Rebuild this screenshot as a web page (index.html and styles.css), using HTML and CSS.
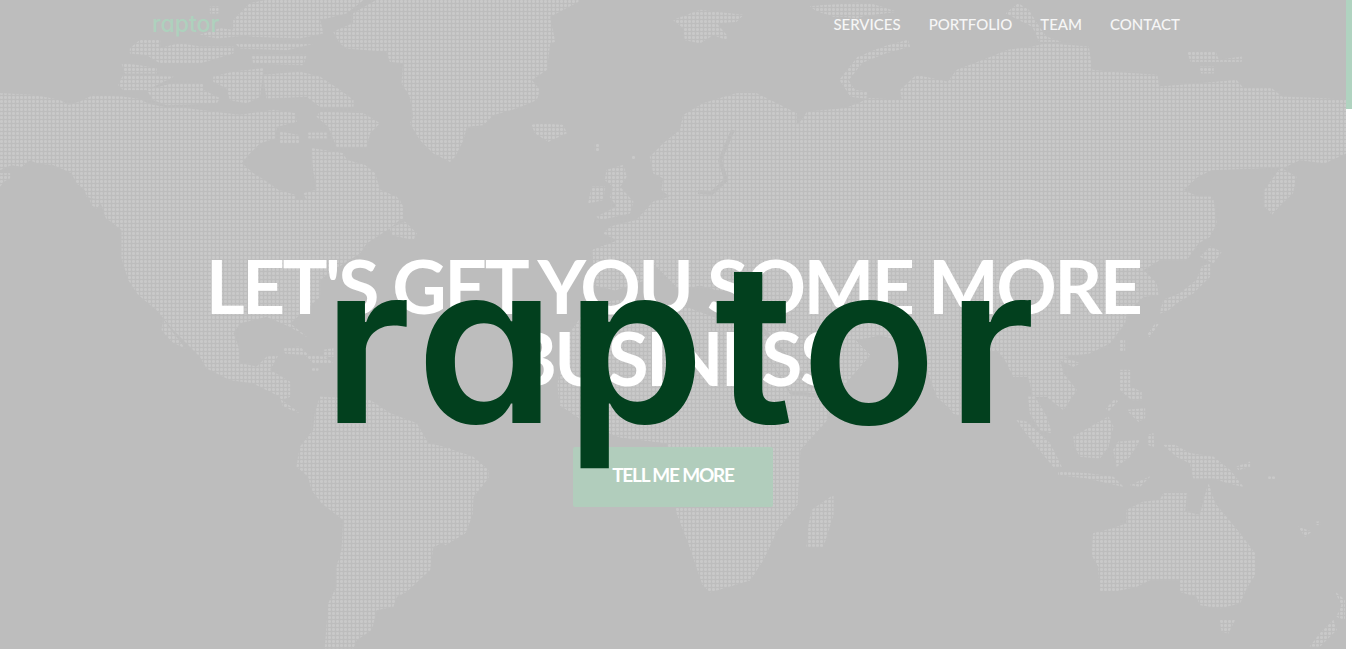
FILE: index.html
```html
<!DOCTYPE html>
<html lang="en">
<head>
<meta charset="utf-8">
<title>raptor</title>
<link rel="stylesheet" href="styles.css">
</head>
<body>
<div class="page">
  <section class="hero">
    <svg class="map" width="1346" height="649" viewBox="0 0 1346 649" aria-hidden="true">
      <defs>
        <pattern id="dots" width="4" height="4" patternUnits="userSpaceOnUse">
          <rect width="3" height="3" rx="1" fill="#c9c9c9"/>
        </pattern>
        <mask id="land" maskUnits="userSpaceOnUse" x="0" y="0" width="1346" height="649">
          <g fill="#fff" stroke="#fff" stroke-width="1">
            <!-- Crop of the north-west: Alaska, Canada, arctic islands, Greenland -->
            <g transform="scale(.3333)">
              <polygon points="0,280 100,285 180,300 205,315 240,305 280,285 370,290 420,298 445,312 495,322 560,325 640,335 720,345 820,330 885,340 890,365 830,380 825,415 780,430 745,465 725,490 760,520 800,545 835,570 885,585 885,610 905,640 925,610 910,580 950,570 940,510 935,445 1030,460 1040,480 1095,495 1125,520 1140,570 1190,590 1210,620 1210,660 320,660 300,600 260,590 255,570 230,550 215,520 195,510 160,495 110,490 90,480 65,500 35,495 0,510"/>
              <polygon points="0,520 30,520 30,535 10,545 0,560"/>
              <polygon points="960,335 1090,340 1140,370 1110,400 1100,440 1010,440 985,380 950,350"/>
              <polygon points="840,395 895,405 900,430 840,430"/>
              <polygon points="925,398 980,398 980,415 925,415"/>
              <polygon points="790,225 900,215 960,230 1020,270 1060,300 1060,320 960,320 920,290 800,295"/>
              <polygon points="355,255 370,225 520,230 440,270 370,270"/>
              <polygon points="440,270 520,250 610,250 610,270 660,295 650,310 500,315 460,300"/>
              <polygon points="640,230 700,215 790,205 780,290 740,310 690,300 680,265 640,245"/>
              <polygon points="365,190 410,195 470,205 470,220 375,220"/>
              <polygon points="390,145 420,120 480,120 480,145 540,130 600,140 700,140 700,160 600,190 480,190 440,165 390,160"/>
              <polygon points="705,130 945,130 860,150 720,145"/>
              <polygon points="755,165 920,165 910,195 760,190"/>
              <polygon points="700,60 750,10 800,0 1090,0 1040,40 960,60 970,100 900,115 760,110 700,100"/>
              <polygon points="630,20 655,20 655,40 630,40"/>
              <polygon points="600,105 660,85 700,90 750,105 650,115"/>
              <polygon points="1000,95 1060,70 1060,40 1130,0 1350,0 1350,485 1300,460 1260,420 1230,370 1240,350 1230,290 1205,250 1210,190 1170,185 1160,155 1040,145 1020,130"/>
            </g>
            <!-- Crop of the north Atlantic: Greenland, Iceland, Europe -->
            <g transform="translate(450 0) scale(.3333)">
              <polygon points="0,485 15,470 40,420 50,380 100,375 130,345 200,325 260,300 270,270 245,240 290,210 300,130 315,125 300,50 385,5 385,0 0,0"/>
              <polygon points="245,375 270,370 340,375 350,400 295,425 255,400"/>
              <polygon points="670,60 750,30 880,45 860,65 800,70 830,105 830,120 790,105 750,130 705,120 700,85"/>
              <polygon points="470,510 520,495 530,530 510,560 550,605 540,640 450,660 440,650 500,620 480,590 490,560 465,540"/>
              <polygon points="425,560 465,560 460,600 415,610"/>
              <polygon points="600,470 640,430 690,390 700,345 760,310 860,280 920,280 980,310 1040,340 1040,375 1080,340 1130,350 1190,325 1260,295 1350,310 1350,780 520,780 520,740 490,715 460,700 480,680 560,660 610,605 660,590 635,570 640,535 610,520"/>
              <polygon points="1080,20 1130,15 1200,15 1260,10 1340,35 1260,45 1150,50 1110,35"/>
              <polygon points="435,430 447,430 447,455 435,455"/>
              <polygon points="545,468 555,468 555,478 545,478"/>
            </g>
            <!-- Crop of Siberia -->
            <g transform="translate(800 0) scale(.352 .3333)">
              <polygon points="0,660 0,370 20,335 130,325 200,295 290,300 285,270 330,225 420,245 445,210 520,180 590,150 660,140 700,130 820,140 830,210 880,215 1015,225 1020,260 1140,250 1240,240 1260,265 1340,265 1370,290 1480,295 1552,300 1552,460 1490,490 1420,480 1360,510 1320,570 1320,620 1340,640 1400,580 1410,530 1360,500 1300,505 1170,510 1130,530 1090,570 1130,590 1170,590 1175,660"/>
              <polygon points="30,20 160,8 230,20 265,35 190,45 160,55 90,45 50,35"/>
              <polygon points="585,40 620,10 650,30 670,65 700,110 740,125 680,125 660,80"/>
              <polygon points="1100,155 1180,155 1190,180 1255,170 1255,185 1110,185"/>
              <polygon points="1135,200 1175,200 1175,220 1140,220"/>
              <polyline points="310,130 240,150 170,180 125,240 150,280 190,285" fill="none" stroke-width="22"/>
            </g>
            <!-- Crop of North and Central America -->
            <g transform="translate(0 200) scale(.3333)">
              <polygon points="310,0 1200,0 1210,50 1170,85 1100,130 1080,160 1000,210 960,240 960,290 870,370 920,410 870,380 800,350 720,370 700,400 715,440 720,490 770,500 800,470 835,465 810,510 870,545 870,590 845,600 900,640 850,620 840,590 760,550 690,540 620,505 600,470 520,390 470,330 415,285 385,240 365,175 365,90 320,55"/>
              <polygon points="270,0 310,0 290,25 275,15"/>
              <polygon points="490,360 520,400 555,445 515,425 485,390"/>
              <polygon points="1170,85 1215,65 1250,100 1240,120 1175,105"/>
              <polygon points="850,445 900,440 925,465 975,470 1000,490 940,490 915,465 855,460"/>
              <polygon points="970,450 1000,445 1000,470 972,470"/>
              <polygon points="935,505 955,505 955,512 935,512"/>
              <polygon points="960,590 1110,600 1170,640 1250,670 1285,730 1350,745 1350,1020 1300,1040 1290,1110 1220,1175 1190,1190 1180,1220 1130,1230 1115,1290 1070,1320 1060,1345 975,1345 985,1210 1010,1160 1010,1100 1025,1050 1030,960 965,910 935,870 925,830 890,800 900,740 940,690 945,640"/>
            </g>
            <polygon points="445,448 473,457 488,470 488,478 473,497 472,515 465,533 445,545"/>
            <!-- Africa, Iberia, Middle East -->
            <polygon points="590,305 620,300 680,305 720,320 745,325 760,345 790,395 830,400 827,420 800,450 797,505 777,530 763,560 750,580 710,592 703,585 690,547 677,513 668,443 620,437 590,425 560,405 558,385 565,340"/>
            <polygon points="593,250 620,240 650,255 645,280 615,290 595,285"/>
            <polygon points="650,240 960,240 960,415 953,413 940,390 920,345 880,335 855,340 870,355 835,395 790,390 745,320 735,295 700,285 680,290 650,260"/>
            <!-- Crop of Asia and Oceania -->
            <g transform="translate(900 200) scale(.3333)">
              <polygon points="940,0 950,70 930,110 895,130 860,180 780,180 730,210 770,250 775,285 730,290 680,340 675,370 630,430 570,460 490,470 540,490 520,500 480,480 490,520 530,570 490,630 440,590 400,590 385,530 340,530 315,480 290,450 180,480 165,640 110,590 60,450 0,420 0,0"/>
              <polygon points="385,590 405,590 440,650 455,700 420,690 390,640"/>
              <polygon points="350,660 380,665 450,730 485,800 460,800 410,740 370,690"/>
              <polygon points="475,815 560,820 640,830 670,860 560,835 475,825"/>
              <polygon points="690,855 750,830 720,860"/>
              <polygon points="520,710 590,670 625,650 640,680 625,740 600,775 540,770 525,740"/>
              <polygon points="655,725 720,720 690,770 650,800 640,750"/>
              <polygon points="745,705 760,700 762,740 745,735"/>
              <polygon points="660,510 690,510 690,560 725,575 725,600 695,600 660,570"/>
              <polygon points="680,630 735,625 735,655 715,665"/>
              <polyline points="622,630 650,600" fill="none" stroke-width="12"/>
              <polyline points="745,408 772,370" fill="none" stroke-width="10"/>
              <polygon points="780,340 790,300 840,280 890,240 905,200 930,190 930,230 880,280 830,310 800,335"/>
              <polygon points="900,170 930,140 965,155 940,190"/>
              <polygon points="1095,5 1150,5 1115,45"/>
              <polygon points="660,420 675,420 675,455 660,455"/>
              <polygon points="790,735 825,735 870,760 940,770 990,810 1030,860 985,850 940,835 880,835 870,790 830,770"/>
              <polygon points="1010,800 1050,785 1050,800 1015,810"/>
              <polygon points="1105,830 1125,830 1125,838 1105,838"/>
              <polygon points="580,1000 640,985 680,970 680,930 730,905 780,900 790,880 860,880 855,935 900,945 925,850 945,910 970,940 1020,1000 1065,1060 1065,1125 1040,1165 1020,1210 960,1225 900,1215 890,1190 840,1175 840,1140 750,1140 710,1160 640,1175 600,1175 595,1100 575,1065"/>
              <polygon points="960,1260 1005,1260 985,1300 965,1295"/>
              <polygon points="1305,1175 1335,1200 1335,1260 1310,1250 1325,1215"/>
              <polygon points="1230,1340 1260,1300 1300,1260 1310,1290 1260,1340"/>
              <polygon points="1195,980 1235,995 1215,1010"/>
              <polygon points="1250,965 1260,965 1260,975 1250,975"/>
            </g>
            <!-- Madagascar -->
            <g transform="translate(450 400) scale(.3333)">
              <polygon points="1150,285 1150,345 1120,440 1070,440 1075,380 1085,330"/>
            </g>
          </g>
          <!-- Seas cut back out of the land -->
          <g fill="none" stroke="#000" stroke-width="4">
            <polyline points="755,320 810,385 838,388"/>
            <polyline points="733,130 720,160 726,180 712,193 698,192"/>
            <polyline points="665,290 735,293"/>
          </g>
        </mask>
      </defs>
      <rect width="1346" height="649" fill="url(#dots)" mask="url(#land)"/>
    </svg>

    <header class="topbar">
      <a class="logo" href="#">raptor</a>
      <nav class="menu">
        <a href="#">SERVICES</a>
        <a href="#">PORTFOLIO</a>
        <a href="#">TEAM</a>
        <a href="#">CONTACT</a>
      </nav>
    </header>

    <div class="intro">
      <h1>LET'S GET YOU SOME MORE<br>BUSINESS</h1>
      <a class="cta" href="#">TELL ME MORE</a>
    </div>

    <div class="splash">raptor</div>
  </section>
  <div class="rail"></div>
</div>
</body>
</html>
```
FILE: styles.css
```css
* { box-sizing: border-box; }

html, body {
  margin: 0;
  height: 100%;
  overflow: hidden;
  background: #fff;
}

body { font-family: "Lato", "Liberation Sans", sans-serif; }

a { text-decoration: none; color: inherit; }

.page {
  display: flex;
  align-items: flex-start;
  height: 649px;
}

.hero {
  position: relative;
  flex: 1;
  height: 649px;
  overflow: hidden;
  background: #bdbdbd;
}

.map {
  position: absolute;
  top: 0;
  left: 0;
  display: block;
}

.rail {
  flex: 0 0 6px;
  height: 109px;
  background: #b0d3c0;
}

.topbar {
  position: relative;
  display: flex;
  align-items: center;
  justify-content: space-between;
  height: 50px;
  padding: 0 166px 2px 152px;
}

.logo {
  font-family: "Inter", "Lato", sans-serif;
  font-feature-settings: "cv11" 1;
  font-size: 23px;
  font-weight: 500;
  color: #aed1bd;
}

.menu {
  display: flex;
  gap: 28px;
  color: #f6f6f6;
  font-size: 15px;
  font-weight: 500;
}

.intro {
  position: relative;
  display: flex;
  flex-direction: column;
  align-items: center;
  padding-top: 199px;
}

.intro h1 {
  margin: 0;
  color: #fff;
  font-size: 75px;
  font-weight: 700;
  letter-spacing: -2.6px;
  line-height: 72px;
  text-align: center;
}

.cta {
  display: flex;
  align-items: center;
  justify-content: center;
  width: 200px;
  height: 60px;
  margin-top: 54px;
  padding-bottom: 6px;
  border-radius: 2px;
  background: #b1cdbc;
  color: #fff;
  font-size: 19px;
  font-weight: 700;
  letter-spacing: -1.2px;
}

.splash {
  position: absolute;
  top: 207px;
  left: 0;
  right: 0;
  padding-left: 22px;
  color: #02401e;
  font-family: "Inter", "Lato", sans-serif;
  font-feature-settings: "cv11" 1;
  font-size: 223px;
  font-weight: 600;
  letter-spacing: 10px;
  line-height: 270px;
  text-align: center;
}
```
